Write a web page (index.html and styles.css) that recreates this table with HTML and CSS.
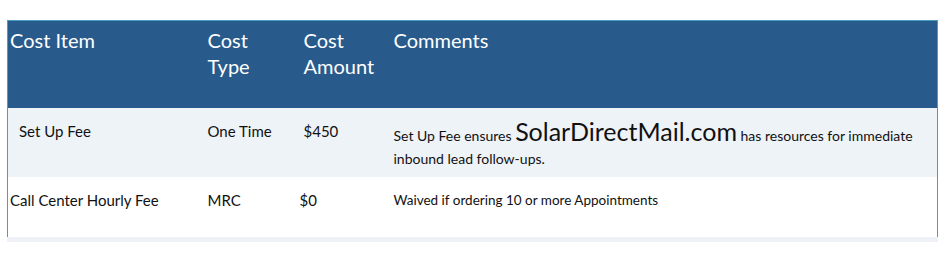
FILE: index.html
```html
<!DOCTYPE html>
<html>
<head>
  <title>Cost Breakdown</title>
  <link rel="stylesheet" href="styles.css">
</head>
<body>
  <div class="sheet">
    <table class="costs">
      <colgroup>
        <col class="col-item">
        <col class="col-type">
        <col class="col-amount">
        <col class="col-comments">
      </colgroup>
      <thead>
        <tr>
          <th>Cost Item</th>
          <th>Cost<br>Type</th>
          <th class="nudge">Cost<br>Amount</th>
          <th>Comments</th>
        </tr>
      </thead>
      <tbody>
        <tr class="shaded">
          <td class="indent">Set Up Fee</td>
          <td>One Time</td>
          <td class="nudge">$450</td>
          <td class="comment">Set Up Fee ensures <span class="brand">SolarDirectMail.com</span> has resources for immediate<br>inbound lead follow-ups.</td>
        </tr>
        <tr>
          <td>Call Center Hourly Fee</td>
          <td>MRC</td>
          <td>$0</td>
          <td class="note">Waived if ordering 10 or more Appointments</td>
        </tr>
      </tbody>
    </table>
    <div class="footer-band"></div>
  </div>
</body>
</html>
```

FILE: styles.css
```css
body {
  margin: 0;
  background-color: #ffffff;
  font-family: Lato, "Open Sans", sans-serif;
  color: #111111;
}

.sheet {
  padding: 20px 0 0 7px;
  width: 931px;
}

.costs {
  width: 931px;
  border-collapse: collapse;
  table-layout: fixed;
  border: 1px solid #4a9cc2;
  border-bottom: none;
}

.col-item { width: 198px; }
.col-type { width: 92px; }
.col-amount { width: 94px; }

.costs th {
  background-color: #285b8c;
  color: #ffffff;
  font-weight: normal;
  font-size: 20px;
  line-height: 26px;
  text-align: left;
  vertical-align: top;
  height: 87px;
  padding: 6px 0 0 2px;
  box-sizing: border-box;
}

.costs td {
  font-size: 15px;
  line-height: 23px;
  vertical-align: top;
  padding: 12px 0 0 2px;
  box-sizing: border-box;
}

.costs tr.shaded td {
  background-color: #eef3f8;
  height: 69px;
}

.costs tbody tr:last-child td {
  height: 60px;
}

.costs .nudge {
  padding-left: 6px;
}

.costs .indent {
  padding-left: 11px;
}

/* first line carries the larger brand name, so it sits a bit lower */
.costs td.comment {
  font-size: 14px;
  padding-top: 13px;
}

.brand {
  font-size: 25px;
  line-height: 20px;
}

.costs td.note {
  font-size: 13.5px;
}

.footer-band {
  height: 5px;
  background-color: #eef2f7;
}
```
